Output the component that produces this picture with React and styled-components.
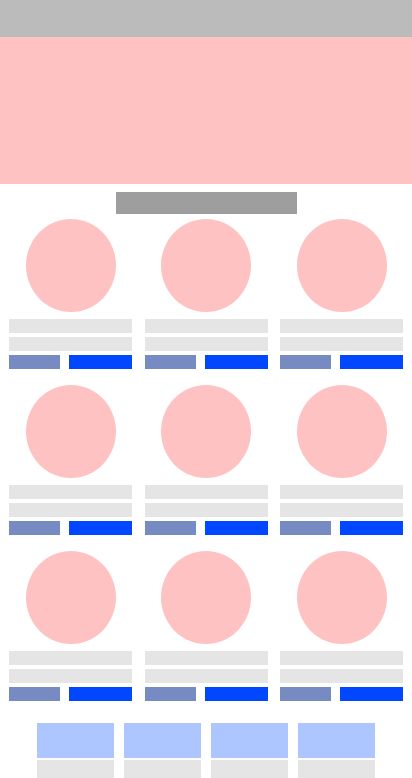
import React from "react";
import styled, { createGlobalStyle } from "styled-components";

const GlobalStyle = createGlobalStyle`
  body {
    margin: 0;
    background: #ffffff;
    font-family: "Liberation Sans", Arial, sans-serif;
  }
`;

const Page = styled.div`
  width: 412px;
  overflow: hidden;
`;

const Header = styled.header`
  height: 37px;
  background: #bbbbbb;
`;

const Hero = styled.section`
  height: 147px;
  background: #ffc2c2;
`;

const TitleBar = styled.div`
  width: 181px;
  height: 22px;
  margin: 8px auto 5px;
  background: #9e9e9e;
`;

const Grid = styled.div`
  display: grid;
  grid-template-columns: repeat(3, 123px);
  column-gap: 12.5px;
  row-gap: 16px;
  padding: 0 9px;
`;

const Card = styled.div`
  display: flex;
  flex-direction: column;
  align-items: stretch;
`;

const Avatar = styled.div`
  width: 90px;
  height: 93px;
  align-self: center;
  border-radius: 50%;
  background: #ffc2c2;
  margin-bottom: 7px;
`;

const Line = styled.div`
  height: 14px;
  background: #e5e5e5;
  margin-bottom: 4px;
`;

const Actions = styled.div`
  display: flex;
  gap: 9px;
  height: 14px;
`;

const Action = styled.div`
  width: ${(p) => (p.$primary ? "63px" : "51px")};
  height: 14px;
  background: ${(p) => (p.$primary ? "#0047ff" : "#768bc1")};
`;

const Footer = styled.div`
  display: flex;
  justify-content: center;
  gap: 10px;
  margin-top: 22px;
`;

const Tile = styled.div`
  width: 77px;
  display: flex;
  flex-direction: column;
  gap: 2px;
`;

const TileImage = styled.div`
  height: 35px;
  background: #aec6ff;
`;

const TileCaption = styled.div`
  height: 30px;
  background: #e5e5e5;
`;

export default function App() {
  const cards = Array.from({ length: 9 });
  const tiles = Array.from({ length: 4 });
  return (
    <Page>
      <GlobalStyle />
      <Header />
      <Hero />
      <TitleBar />
      <Grid>
        {cards.map((_, i) => (
          <Card key={i}>
            <Avatar />
            <Line />
            <Line />
            <Actions>
              <Action />
              <Action $primary />
            </Actions>
          </Card>
        ))}
      </Grid>
      <Footer>
        {tiles.map((_, i) => (
          <Tile key={i}>
            <TileImage />
            <TileCaption />
          </Tile>
        ))}
      </Footer>
    </Page>
  );
}
